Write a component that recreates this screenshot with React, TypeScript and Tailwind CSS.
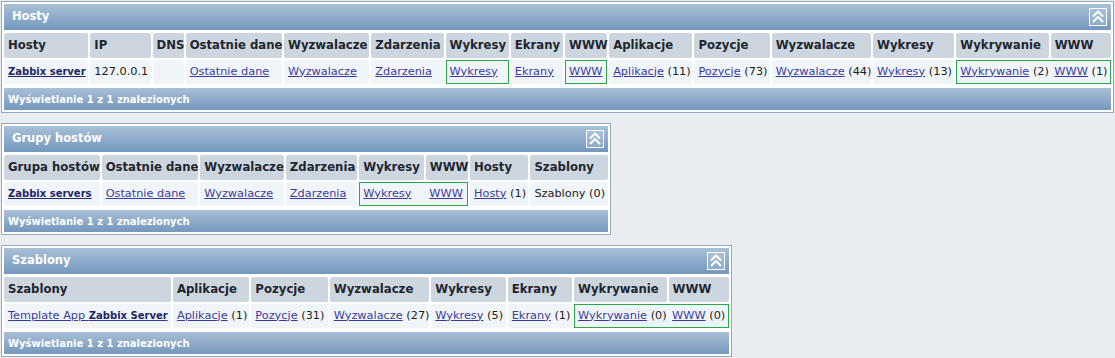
import type { ReactNode } from 'react';

type Col = { title: string; w: number };
type Cell = { content: ReactNode; span?: number; box?: boolean; widths?: number[]; parts?: ReactNode[] };

const A = ({ children, bold }: { children: ReactNode; bold?: boolean }) => (
  <a
    href="#"
    className={`underline ${bold ? 'text-[10px] font-bold text-[#1d2566]' : 'text-[#3b3a9c]'}`}
  >
    {children}
  </a>
);

const Count = ({ label, n }: { label: string; n: number }) => (
  <>
    <A>{label}</A> <span>({n})</span>
  </>
);

function CollapseIcon() {
  return (
    <svg width="18" height="18" viewBox="0 0 18 18" className="block">
      <rect x="0.5" y="0.5" width="17" height="17" fill="rgba(255,255,255,0.12)" stroke="#ffffff" strokeWidth="1" />
      <polyline points="4,8.5 9,3.5 14,8.5" fill="none" stroke="#ffffff" strokeWidth="2" />
      <polyline points="4,14 9,9 14,14" fill="none" stroke="#ffffff" strokeWidth="2" />
    </svg>
  );
}

function Widget({ title, cols, row, width }: { title: string; cols: Col[]; row: Cell[]; width: number }) {
  return (
    <div className="w-fit border border-[#97a8bb] bg-white p-[2px]">
      {/* title bar */}
      <div className="flex h-[26px] items-center justify-between bg-gradient-to-b from-[#aac0d7] to-[#7398bd] pl-[8px] pr-[4px]">
        <span className="text-[11.5px] font-bold text-white">{title}</span>
        <CollapseIcon />
      </div>
      <table
        className="mt-[1px] table-fixed border-separate border-spacing-[2px] -mx-[2px]"
        style={{ width: width + 4 }}
      >
        <thead>
          <tr>
            {cols.map((c, i) => (
              <th
                key={i}
                className="h-[25px] rounded-[2px] bg-[#cdd6df] px-[4px] text-left text-[11.7px] font-bold whitespace-nowrap text-[#1e2630]"
                style={{ width: c.w }}
              >
                {c.title}
              </th>
            ))}
          </tr>
        </thead>
        <tbody>
          <tr>
            {row.map((cell, i) =>
              cell.parts ? (
                <td
                  key={i}
                  colSpan={cell.span}
                  className="h-[24px] bg-[#f0f5f9] p-0 text-[11.3px] whitespace-nowrap text-[#1a1a1a] shadow-[inset_0_0_0_1px_#2ba64b]"
                >
                  <div className="flex gap-[2px]">
                    {cell.parts.map((p, j) => (
                      <div key={j} className="px-[4px]" style={{ width: cell.widths![j] }}>
                        {p}
                      </div>
                    ))}
                  </div>
                </td>
              ) : (
                <td
                  key={i}
                  className={`h-[24px] rounded-[2px] bg-[#f0f5f9] px-[4px] text-[11.3px] whitespace-nowrap text-[#1a1a1a] ${
                    cell.box ? 'rounded-none shadow-[inset_0_0_0_1px_#2ba64b]' : ''
                  }`}
                >
                  {cell.content}
                </td>
              )
            )}
          </tr>
        </tbody>
      </table>
      <div className="mt-[2px] flex h-[22px] items-center bg-gradient-to-b from-[#a9bfd6] to-[#7598bc] pl-[4px] text-[10px] font-bold text-white">
        Wyświetlanie 1 z 1 znalezionych
      </div>
    </div>
  );
}

const hostCols: Col[] = [
  { title: 'Hosty', w: 84 },
  { title: 'IP', w: 60 },
  { title: 'DNS', w: 31 },
  { title: 'Ostatnie dane', w: 96 },
  { title: 'Wyzwalacze', w: 85 },
  { title: 'Zdarzenia', w: 72 },
  { title: 'Wykresy', w: 63 },
  { title: 'Ekrany', w: 52 },
  { title: 'WWW', w: 42 },
  { title: 'Aplikacje', w: 83 },
  { title: 'Pozycje', w: 75 },
  { title: 'Wyzwalacze', w: 99 },
  { title: 'Wykresy', w: 81 },
  { title: 'Wykrywanie', w: 92 },
  { title: 'WWW', w: 60 },
];

const hostRow: Cell[] = [
  { content: <A bold>Zabbix server</A> },
  { content: '127.0.0.1' },
  { content: '' },
  { content: <A>Ostatnie dane</A> },
  { content: <A>Wyzwalacze</A> },
  { content: <A>Zdarzenia</A> },
  { content: <A>Wykresy</A>, box: true },
  { content: <A>Ekrany</A> },
  { content: <A>WWW</A>, box: true },
  { content: <Count label="Aplikacje" n={11} /> },
  { content: <Count label="Pozycje" n={73} /> },
  { content: <Count label="Wyzwalacze" n={44} /> },
  { content: <Count label="Wykresy" n={13} /> },
  {
    content: null,
    span: 2,
    widths: [92, 60],
    parts: [<Count label="Wykrywanie" n={2} />, <Count label="WWW" n={1} />],
  },
];

const groupCols: Col[] = [
  { title: 'Grupa hostów', w: 95 },
  { title: 'Ostatnie dane', w: 96 },
  { title: 'Wyzwalacze', w: 83 },
  { title: 'Zdarzenia', w: 71 },
  { title: 'Wykresy', w: 64 },
  { title: 'WWW', w: 42 },
  { title: 'Hosty', w: 58 },
  { title: 'Szablony', w: 77 },
];

const groupRow: Cell[] = [
  { content: <A bold>Zabbix servers</A> },
  { content: <A>Ostatnie dane</A> },
  { content: <A>Wyzwalacze</A> },
  { content: <A>Zdarzenia</A> },
  { content: null, span: 2, widths: [64, 42], parts: [<A>Wykresy</A>, <A>WWW</A>] },
  { content: <Count label="Hosty" n={1} /> },
  { content: 'Szablony (0)' },
];

const tplCols: Col[] = [
  { title: 'Szablony', w: 166 },
  { title: 'Aplikacje', w: 76 },
  { title: 'Pozycje', w: 76 },
  { title: 'Wyzwalacze', w: 99 },
  { title: 'Wykresy', w: 74 },
  { title: 'Ekrany', w: 64 },
  { title: 'Wykrywanie', w: 92 },
  { title: 'WWW', w: 60 },
];

const tplRow: Cell[] = [
  {
    content: (
      <a href="#" className="text-[#3b3a9c] underline">
        Template App <b className="text-[10px] text-[#1d2566]">Zabbix Server</b>
      </a>
    ),
  },
  { content: <Count label="Aplikacje" n={1} /> },
  { content: <Count label="Pozycje" n={31} /> },
  { content: <Count label="Wyzwalacze" n={27} /> },
  { content: <Count label="Wykresy" n={5} /> },
  { content: <Count label="Ekrany" n={1} /> },
  {
    content: null,
    span: 2,
    widths: [92, 60],
    parts: [<Count label="Wykrywanie" n={0} />, <Count label="WWW" n={0} />],
  },
];

export default function App() {
  return (
    <div
      className="min-h-[358px] bg-[#e9edf1] pl-[1px] pt-[1px]"
      style={{ fontFamily: '"DejaVu Sans", Verdana, sans-serif' }}
    >
      <div className="flex flex-col gap-[10px]">
        <Widget title="Hosty" cols={hostCols} row={hostRow} width={1107} />
        <Widget title="Grupy hostów" cols={groupCols} row={groupRow} width={604} />
        <Widget title="Szablony" cols={tplCols} row={tplRow} width={725} />
      </div>
    </div>
  );
}
